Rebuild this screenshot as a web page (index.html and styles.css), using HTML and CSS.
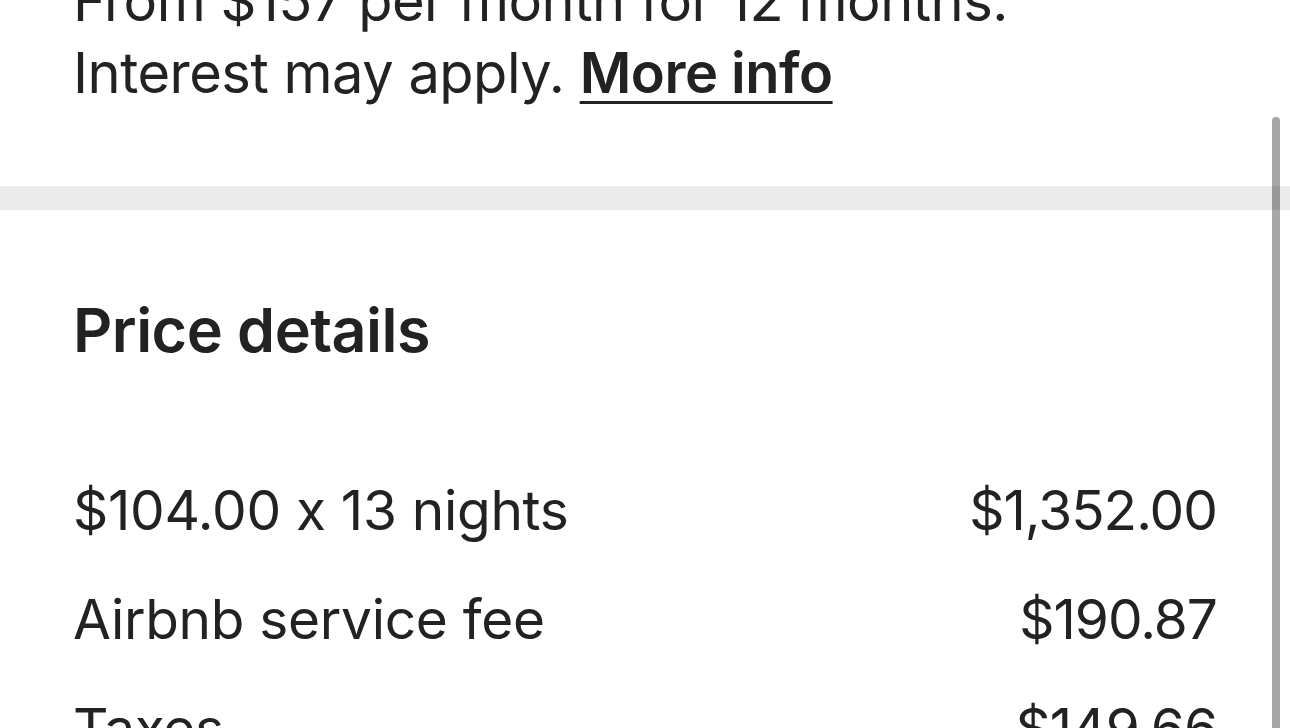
FILE: index.html
```html
<!DOCTYPE html>
<html lang="en">
<head>
  <meta charset="UTF-8">
  <meta name="viewport" content="width=device-width, initial-scale=1.0">
  <title>Price details</title>
  <link rel="stylesheet" href="styles.css">
</head>
<body>
<div class="sheet">
  <section class="installments">
    <p>From $157 per month for 12 months.<br>Interest may apply. <a href="#">More info</a></p>
  </section>
  <div class="divider"></div>
  <section class="price">
    <h2>Price details</h2>
    <div class="row"><span>$104.00 x 13 nights</span><span class="amount">$1,352.00</span></div>
    <div class="row"><span>Airbnb service fee</span><span class="amount">$190.87</span></div>
    <div class="row"><span>Taxes</span><span class="amount">$149.66</span></div>
  </section>
  <div class="scrollbar"></div>
</div>
</body>
</html>
```

FILE: styles.css
```css
:root {
  --text: #222222;
  --divider: #ebebeb;
}
html, body {
  margin: 0;
  height: 100%;
  overflow: hidden;
  background: #fff;
}
body {
  font-family: Inter, "Noto Sans", sans-serif;
  color: var(--text);
}
.sheet {
  position: relative;
  display: flow-root;
  height: 100%;
}
.installments {
  padding: 0 73px;
  margin-top: -35px;
}
.installments p {
  margin: 0;
  font-size: 56px;
  line-height: 72px;
  letter-spacing: -0.5px;
}
.installments a {
  color: var(--text);
  font-weight: 600;
  text-decoration: underline;
  text-decoration-thickness: 3px;
  text-underline-offset: 8px;
}
.divider {
  height: 24px;
  background: var(--divider);
  margin-top: 77px;
}
.price {
  padding: 80px 73px 0 73px;
}
.price h2 {
  margin: 0 0 86px;
  font-size: 61px;
  line-height: 80px;
  font-weight: 600;
  letter-spacing: -0.5px;
}
.row {
  display: flex;
  justify-content: space-between;
  font-size: 55px;
  line-height: 109px;
  letter-spacing: -0.3px;
}
.row .amount {
  letter-spacing: -1px;
}
.scrollbar {
  position: absolute;
  top: 117px;
  right: 10px;
  width: 8px;
  height: 700px;
  border-radius: 4px;
  background: rgba(0, 0, 0, 0.35);
}
```
